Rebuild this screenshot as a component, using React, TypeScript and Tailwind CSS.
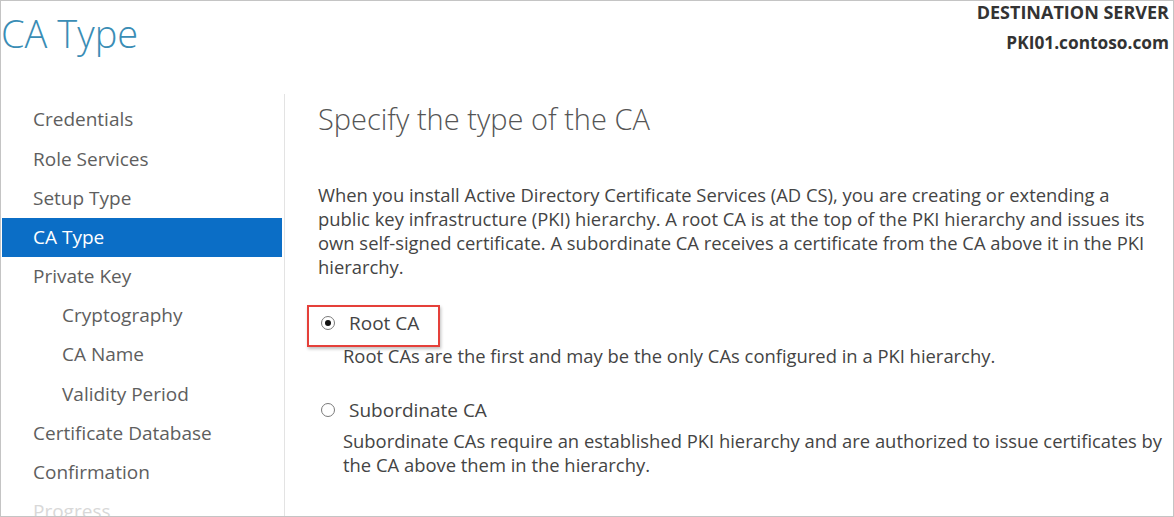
const navItems = [
  { label: "Credentials" },
  { label: "Role Services" },
  { label: "Setup Type" },
  { label: "CA Type", active: true },
  { label: "Private Key" },
  { label: "Cryptography", sub: true },
  { label: "CA Name", sub: true },
  { label: "Validity Period", sub: true },
  { label: "Certificate Database" },
  { label: "Confirmation" },
  { label: "Progress", disabled: true },
];

const Radio = ({ checked }: { checked?: boolean }) => (
  <span className="flex h-[14px] w-[14px] shrink-0 items-center justify-center rounded-full border border-[#7a7a7a] bg-white">
    {checked && <span className="h-[6px] w-[6px] rounded-full bg-[#111]" />}
  </span>
);

export default function App() {
  return (
    <div
      className="flex h-[517px] w-[1174px] flex-col overflow-hidden border border-[#c4c4c4] bg-white text-[#444]"
      style={{ fontFamily: '"Open Sans", "Noto Sans", sans-serif' }}
    >
      {/* Header */}
      <div className="flex h-[93px] shrink-0 justify-between">
        <h1 className="pl-0 pt-[10px] text-[38px] font-light leading-[44px] text-[#3a8db5]">CA Type</h1>
        <div className="pr-[4px] text-right font-bold leading-[22px] text-[#333]">
          <div className="text-[18px]">DESTINATION SERVER</div>
          <div className="mt-[9px] text-[17.3px]">PKI01.contoso.com</div>
        </div>
      </div>

      <div className="flex min-h-0 flex-1">
        {/* Sidebar */}
        <nav className="w-[284px] shrink-0 border-r border-[#e3e3e3] pt-[6px] pl-[1px]">
          {navItems.map((item) => (
            <div
              key={item.label}
              className={`mr-[2px] flex h-[39.2px] items-center text-[19px] ${
                item.sub ? "pl-[60px]" : "pl-[31px]"
              } ${
                item.active
                  ? "bg-[#0b6ec6] text-white"
                  : item.disabled
                  ? "text-[#d8d8d8]"
                  : "text-[#5e5e5e]"
              }`}
            >
              {item.label}
            </div>
          ))}
        </nav>

        {/* Content */}
        <main className="flex-1 pl-[33px] pr-[2px] pt-[5px]">
          <h2 className="text-[29px] font-light leading-[40px] text-[#555]">Specify the type of the CA</h2>

          <p className="mt-[44px] max-w-[835px] text-[18.4px] leading-[24px] text-[#444]">
            When you install Active Directory Certificate Services (AD CS), you are creating or extending a public
            key infrastructure (PKI) hierarchy. A root CA is at the top of the PKI hierarchy and issues its own
            self-signed certificate. A subordinate CA receives a certificate from the CA above it in the PKI
            hierarchy.
          </p>

          <div className="mt-[32px]">
            <div className="relative flex items-center gap-[14px] pl-[3px] text-[19px] leading-[24px] text-[#444]">
              <Radio checked />
              <span>Root CA</span>
              <span className="pointer-events-none absolute left-[-11px] top-[-6px] h-[42px] w-[133px] border-2 border-[#e5403a] shadow-[1px_2px_3px_rgba(0,0,0,0.25)]" />
            </div>
            <p className="mt-[9px] pl-[25px] text-[18.4px] leading-[24px] text-[#444]">
              Root CAs are the first and may be the only CAs configured in a PKI hierarchy.
            </p>
          </div>

          <div className="mt-[30px]">
            <div className="flex items-center gap-[14px] pl-[3px] text-[19px] leading-[24px] text-[#444]">
              <Radio />
              <span>Subordinate CA</span>
            </div>
            <p className="mt-[7px] pl-[25px] text-[18.4px] leading-[24px] text-[#444]">
              Subordinate CAs require an established PKI hierarchy and are authorized to issue certificates by
              the CA above them in the hierarchy.
            </p>
          </div>
        </main>
      </div>
    </div>
  );
}
